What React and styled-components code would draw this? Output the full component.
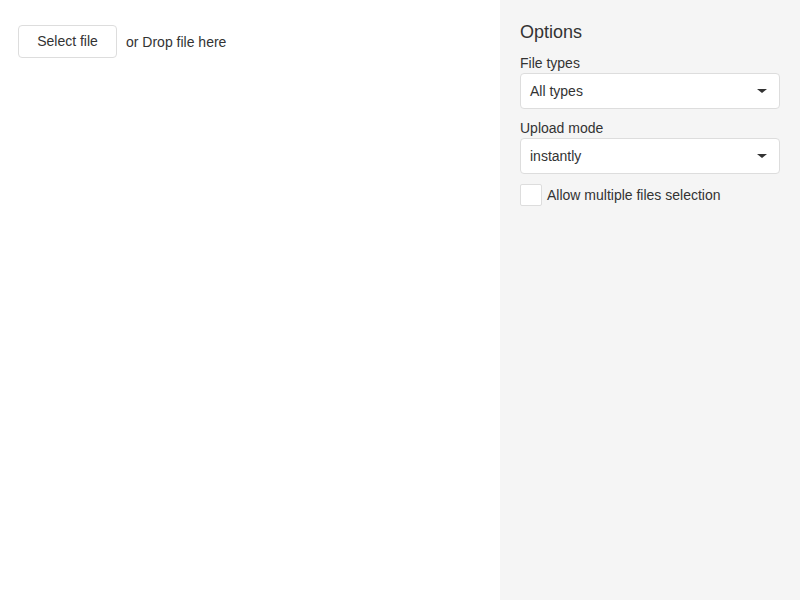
import React from "react";
import styled, { createGlobalStyle } from "styled-components";

const GlobalStyle = createGlobalStyle`
  html, body {
    margin: 0;
    padding: 0;
    background: #fff;
  }
  body {
    font-family: "Liberation Sans", Arial, sans-serif;
    font-size: 14px;
    color: #333;
  }
`;

const Page = styled.div`
  display: flex;
  width: 800px;
  height: 600px;
`;

// left area with the uploader
const UploaderArea = styled.div`
  flex: 1;
  padding: 25px 18px;
`;

const UploaderRow = styled.div`
  display: flex;
  align-items: center;
  gap: 9px;
`;

const SelectButton = styled.button`
  height: 33px;
  width: 99px;
  padding: 0 0 2px;
  border: 1px solid #ddd;
  border-radius: 4px;
  background: #fff;
  color: #333;
  font-family: inherit;
  font-size: 14px;
  cursor: pointer;
`;

const DropText = styled.span`
  font-size: 14px;
  color: #333;
  padding-top: 1px;
`;

// options panel
const Options = styled.div`
  width: 260px;
  padding: 20px;
  background: #f5f5f5;
  display: flex;
  flex-direction: column;
`;

const Caption = styled.div`
  font-size: 18px;
  line-height: 24px;
  margin-bottom: 10px;
`;

const Label = styled.div`
  font-size: 14px;
  line-height: 18px;
  margin-bottom: 1px;
`;

const Field = styled.div`
  margin-bottom: ${({ gap }) => gap || 10}px;
`;

const SelectBox = styled.div`
  display: flex;
  align-items: center;
  justify-content: space-between;
  height: 34px;
  padding: 0 12px 0 9px;
  border: 1px solid #ddd;
  border-radius: 4px;
  background: #fff;
  font-size: 14px;
`;

const Caret = styled.span`
  width: 0;
  height: 0;
  border-left: 5px solid transparent;
  border-right: 5px solid transparent;
  border-top: 4px solid #333;
`;

const CheckRow = styled.label`
  display: flex;
  align-items: center;
  gap: 5px;
`;

const CheckBox = styled.span`
  width: 20px;
  height: 20px;
  border: 1px solid #ddd;
  border-radius: 2px;
  background: #fff;
`;

const Select = ({ value }) => (
  <SelectBox>
    <span>{value}</span>
    <Caret />
  </SelectBox>
);

export default function App() {
  return (
    <>
      <GlobalStyle />
      <Page>
        <UploaderArea>
          <UploaderRow>
            <SelectButton>Select file</SelectButton>
            <DropText>or Drop file here</DropText>
          </UploaderRow>
        </UploaderArea>
        <Options>
          <Caption>Options</Caption>
          <Field>
            <Label>File types</Label>
            <Select value="All types" />
          </Field>
          <Field>
            <Label>Upload mode</Label>
            <Select value="instantly" />
          </Field>
          <CheckRow>
            <CheckBox />
            <span>Allow multiple files selection</span>
          </CheckRow>
        </Options>
      </Page>
    </>
  );
}
